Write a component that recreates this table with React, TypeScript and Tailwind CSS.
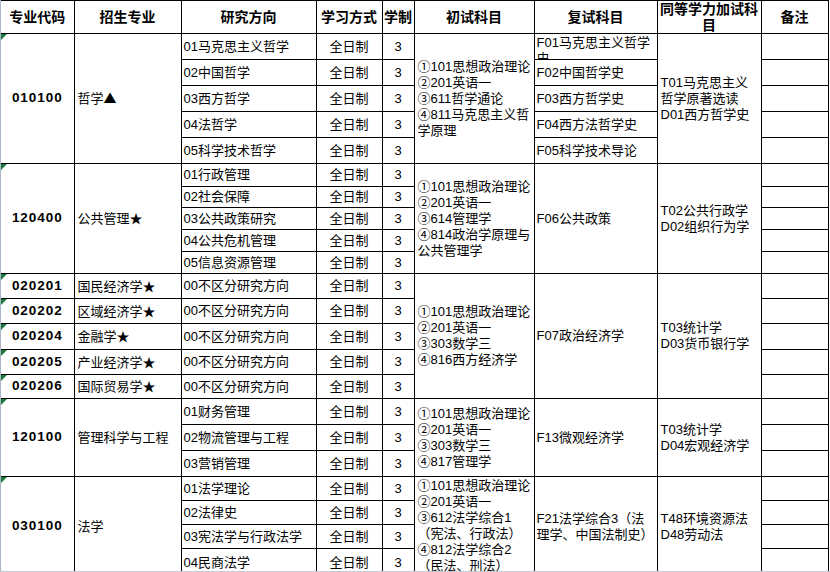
import { clsx } from 'clsx'

interface Section {
  codes: string[]
  majors: string[]
  rowH: string[]
  dirs: string[]
  initial: string[]
  initialTop?: boolean
  retest: string[][]
  extra: string[]
}

const sections: Section[] = [
  {
    codes: ['010100'],
    majors: ['哲学▲'],
    rowH: ['h-[26px]', 'h-[26px]', 'h-[26px]', 'h-[26px]', 'h-[26px]'],
    dirs: ['01马克思主义哲学', '02中国哲学', '03西方哲学', '04法哲学', '05科学技术哲学'],
    initial: ['①101思想政治理论', '②201英语一', '③611哲学通论', '④811马克思主义哲', '学原理'],
    retest: [['F01马克思主义哲学', '史'], ['F02中国哲学史'], ['F03西方哲学史'], ['F04西方法哲学史'], ['F05科学技术导论']],
    extra: ['T01马克思主义', '哲学原著选读', 'D01西方哲学史'],
  },
  {
    codes: ['120400'],
    majors: ['公共管理★'],
    rowH: ['h-[23px]', 'h-[21px]', 'h-[22px]', 'h-[22px]', 'h-[22px]'],
    dirs: ['01行政管理', '02社会保障', '03公共政策研究', '04公共危机管理', '05信息资源管理'],
    initial: ['①101思想政治理论', '②201英语一', '③614管理学', '④814政治学原理与', '公共管理学'],
    retest: [['F06公共政策']],
    extra: ['T02公共行政学', 'D02组织行为学'],
  },
  {
    codes: ['020201', '020202', '020204', '020205', '020206'],
    majors: ['国民经济学★', '区域经济学★', '金融学★', '产业经济学★', '国际贸易学★'],
    rowH: ['h-[25px]', 'h-[25px]', 'h-[26px]', 'h-[25px]', 'h-[24px]'],
    dirs: ['00不区分研究方向', '00不区分研究方向', '00不区分研究方向', '00不区分研究方向', '00不区分研究方向'],
    initial: ['①101思想政治理论', '②201英语一', '③303数学三', '④816西方经济学'],
    retest: [['F07政治经济学']],
    extra: ['T03统计学', 'D03货币银行学'],
  },
  {
    codes: ['120100'],
    majors: ['管理科学与工程'],
    rowH: ['h-[26px]', 'h-[26px]', 'h-[26px]'],
    dirs: ['01财务管理', '02物流管理与工程', '03营销管理'],
    initial: ['①101思想政治理论', '②201英语一', '③303数学三', '④817管理学'],
    retest: [['F13微观经济学']],
    extra: ['T03统计学', 'D04宏观经济学'],
  },
  {
    codes: ['030100'],
    majors: ['法学'],
    rowH: ['h-[24px]', 'h-[24px]', 'h-[24px]', 'h-[28px]'],
    dirs: ['01法学理论', '02法律史', '03宪法学与行政法学', '04民商法学'],
    initial: ['①101思想政治理论', '②201英语一', '③612法学综合1', '（宪法、行政法）', '④812法学综合2', '（民法、刑法）'],
    initialTop: true,
    retest: [['F21法学综合3（法', '理学、中国法制史）']],
    extra: ['T48环境资源法', 'D48劳动法'],
  },
]

const td = 'border border-black p-0 align-middle'
const headers = ['专业代码', '招生专业', '研究方向', '学习方式', '学制', '初试科目', '复试科目', '', '备注']

function Lines({ lines, className }: { lines: string[]; className?: string }) {
  return (
    <div className={clsx('leading-[16px]', className)}>
      {lines.map((l, i) => (
        <div key={i} className="whitespace-nowrap">{l}</div>
      ))}
    </div>
  )
}

// ▲ / ★ marks are full-width in the sheet font
function Major({ name }: { name: string }) {
  const mark = name.slice(-1)
  if (mark !== '▲' && mark !== '★') return <>{name}</>
  return (
    <>
      {name.slice(0, -1)}
      <span className="font-['Noto_Sans_CJK_SC',sans-serif]">{mark}</span>
    </>
  )
}

// little green "number stored as text" marker
function Flag() {
  return (
    <span className="absolute left-0 top-0 h-0 w-0 border-r-[6px] border-t-[6px] border-r-transparent border-t-[#1d7a3c]" />
  )
}

function CodeCell({ code, rows }: { code: string; rows: number }) {
  return (
    <td
      rowSpan={rows}
      className={clsx(td, 'relative border-l-0 text-center text-[13.5px] font-bold tracking-[0.07em]')}
    >
      <Flag />
      {code}
    </td>
  )
}

function SectionRows({ s }: { s: Section }) {
  const n = s.dirs.length
  const perRowCode = s.codes.length > 1
  const perRowRetest = s.retest.length > 1
  return (
    <>
      {s.dirs.map((dir, i) => (
        <tr key={i} className={s.rowH[i]}>
          {(perRowCode || i === 0) && <CodeCell code={s.codes[perRowCode ? i : 0]} rows={perRowCode ? 1 : n} />}
          {(perRowCode || i === 0) && (
            <td rowSpan={perRowCode ? 1 : n} className={clsx(td, 'whitespace-nowrap px-[3px]')}>
              <Major name={s.majors[perRowCode ? i : 0]} />
            </td>
          )}
          <td className={clsx(td, 'whitespace-nowrap px-[2px]')}>{dir}</td>
          <td className={clsx(td, 'text-center')}>全日制</td>
          <td className={clsx(td, 'text-center')}>3</td>
          {i === 0 && (
            <td rowSpan={n} className={clsx(td, 'px-[3px]', s.initialTop ? 'align-top pt-[1px]' : '')}>
              <Lines lines={s.initial} />
            </td>
          )}
          {perRowRetest ? (
            <td className={clsx(td, 'px-[2px]')}>
              {s.retest[i].length > 1 ? (
                <div className="h-[25px] overflow-hidden pt-[1px]">
                  <Lines lines={s.retest[i]} />
                </div>
              ) : (
                <Lines lines={s.retest[i]} />
              )}
            </td>
          ) : (
            i === 0 && (
              <td rowSpan={n} className={clsx(td, 'px-[2px]')}>
                <Lines lines={s.retest[0]} />
              </td>
            )
          )}
          {i === 0 && (
            <td rowSpan={n} className={clsx(td, 'px-[3px]')}>
              <Lines lines={s.extra} />
            </td>
          )}
          <td className={td} />
        </tr>
      ))}
    </>
  )
}

export default function App() {
  return (
    <div className="flex h-[572px] w-[830px] flex-col overflow-hidden bg-white text-black">
      <div className="flex-1 overflow-hidden border-l border-[#a9b6c5]">
        <table className="w-[827px] table-fixed border-collapse font-['Liberation_Sans','Noto_Sans_CJK_SC',sans-serif] text-[13px]">
          <colgroup>
            <col className="w-[73px]" />
            <col className="w-[107px]" />
            <col className="w-[135px]" />
            <col className="w-[66px]" />
            <col className="w-[32px]" />
            <col className="w-[120px]" />
            <col className="w-[123px]" />
            <col className="w-[104px]" />
            <col className="w-[67px]" />
          </colgroup>
          <thead>
            <tr className="h-[33px]">
              {headers.map((h, i) => (
                <th
                  key={i}
                  className={clsx(
                    td,
                    'text-center text-[14px] font-bold',
                    i === 0 && 'border-l-0',
                  )}
                >
                  {i === 7 ? (
                    <div className="leading-[16px]">
                      <div>同等学力加试科</div>
                      <div>目</div>
                    </div>
                  ) : (
                    h
                  )}
                </th>
              ))}
            </tr>
          </thead>
          <tbody>
            {sections.map((s, i) => (
              <SectionRows key={i} s={s} />
            ))}
          </tbody>
        </table>
      </div>
      <div className="h-px bg-[#c4ccd6]" />
    </div>
  )
}
